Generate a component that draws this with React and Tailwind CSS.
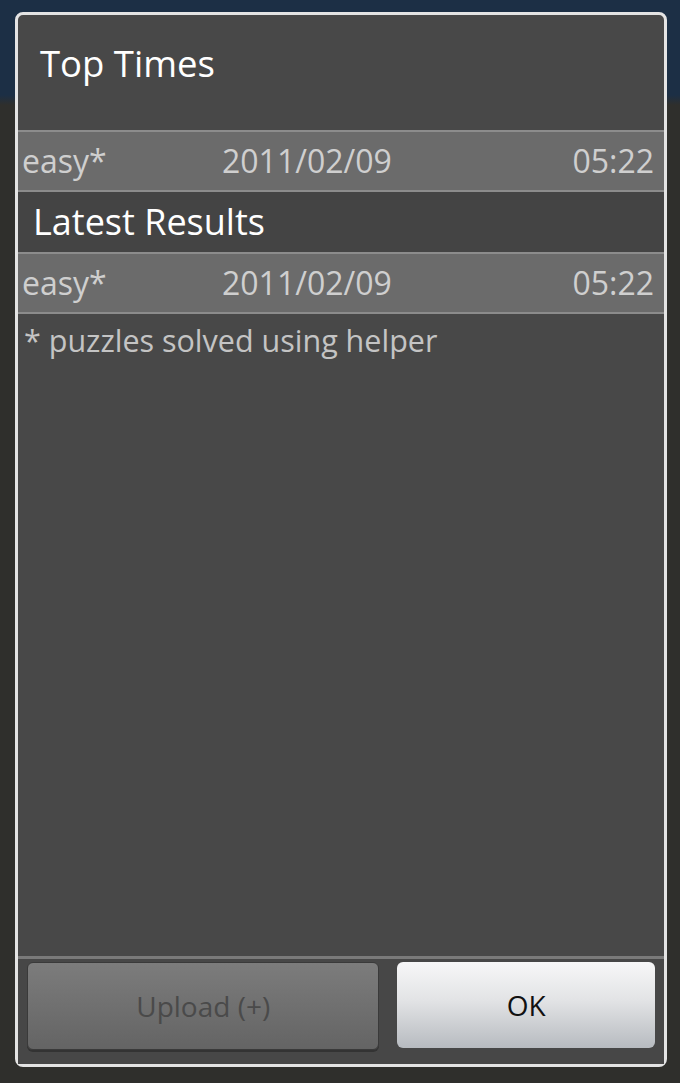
const rows = {
  top: [{ level: "easy*", date: "2011/02/09", time: "05:22" }],
  latest: [{ level: "easy*", date: "2011/02/09", time: "05:22" }],
};

const ResultRow = ({ level, date, time }) => (
  <div className="flex h-[62px] items-center border-y-2 border-[#8c8c8c] bg-[#6b6b6b] pl-[4px] pr-[10px] text-[32px] text-[#cfcfcf]">
    <span className="w-[200px]">{level}</span>
    <span className="flex-1">{date}</span>
    <span>{time}</span>
  </div>
);

export default function App() {
  return (
    <div
      className="h-[1083px] w-[680px] overflow-hidden bg-[linear-gradient(to_bottom,#1c2f45_0px,#1c2f45_95px,#2f2f2c_105px,#2f2f2c_100%)] pt-[12px] pl-[15px]"
      style={{ fontFamily: '"Open Sans", "Noto Sans", sans-serif' }}
    >
      <div className="flex h-[1055px] w-[652px] flex-col rounded-[8px] border-[3px] border-[#e4e4e4] bg-[#484848]">
        {/* title */}
        <div className="flex h-[115px] items-start pl-[22px] pt-[23px]">
          <h1 className="text-[36.5px] leading-[50px] text-white">Top Times</h1>
        </div>

        {rows.top.map((r, i) => (
          <ResultRow key={i} {...r} />
        ))}

        <div className="flex h-[60px] items-center bg-[#444444] pl-[15px] text-[36px] text-white">
          Latest Results
        </div>

        {rows.latest.map((r, i) => (
          <ResultRow key={i} {...r} />
        ))}

        <p className="pl-[6px] pt-[7px] text-[30.5px] leading-[38px] text-[#c4c4c4]">
          * puzzles solved using helper
        </p>

        <div className="flex-1" />

        {/* buttons */}
        <div className="flex gap-[18px] border-t-[3px] border-[#7a7a7a] bg-[#474747] px-[9px] pt-[3px] pb-[14px]">
          <button
            disabled
            className="h-[88px] w-[353px] rounded-[6px] border border-[#3a3a3a] bg-[linear-gradient(to_bottom,#7c7c7c,#646464)] text-[28px] text-[#4a4a4a] shadow-[0_2px_0_#333]"
          >
            Upload (+)
          </button>
          <button className="h-[86px] w-[258px] rounded-[6px] bg-[linear-gradient(to_bottom,#f7f7f8,#e2e3e5_45%,#b7bbc0)] text-[28px] text-[#111]">
            OK
          </button>
        </div>
      </div>
    </div>
  );
}
